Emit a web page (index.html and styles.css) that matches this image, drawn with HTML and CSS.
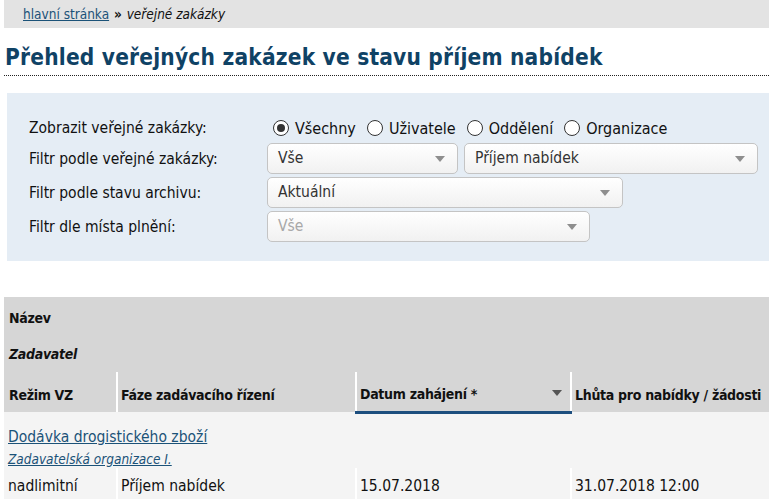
FILE: index.html
```html
<!DOCTYPE html>
<html>
  <head>
    <meta http-equiv="Content-Type" content="text/html; charset=utf-8" />
    <title>Přehled veřejných zakázek</title>
    <link rel="stylesheet" href="styles.css">
  </head>

  <body>
    <div class="page">
      <div class="crumbs">
        <a href="#">hlavní stránka</a> <span class="sep">»</span> <em>veřejné zakázky</em>
      </div>

      <h1 class="title">Přehled veřejných zakázek ve stavu příjem nabídek</h1>

      <div class="filter">
        <div class="row first">
          <label class="lbl">Zobrazit veřejné zakázky:</label>
          <div class="radios">
            <span class="radio checked"></span><span class="rtext">Všechny</span>
            <span class="radio"></span><span class="rtext">Uživatele</span>
            <span class="radio"></span><span class="rtext">Oddělení</span>
            <span class="radio"></span><span class="rtext">Organizace</span>
          </div>
        </div>
        <div class="row">
          <label class="lbl">Filtr podle veřejné zakázky:</label>
          <div class="sel w1"><span>Vše</span><i class="arrow"></i></div>
          <div class="sel w2"><span>Příjem nabídek</span><i class="arrow"></i></div>
        </div>
        <div class="row">
          <label class="lbl">Filtr podle stavu archivu:</label>
          <div class="sel w3"><span>Aktuální</span><i class="arrow"></i></div>
        </div>
        <div class="row">
          <label class="lbl">Filtr dle místa plnění:</label>
          <div class="sel w4 disabled"><span>Vše</span><i class="arrow"></i></div>
        </div>
      </div>

      <table class="grid">
        <thead>
          <tr class="h1"><th colspan="4">Název</th></tr>
          <tr class="h2"><th colspan="4"><em>Zadavatel</em></th></tr>
          <tr class="h3">
            <th class="c1">Režim VZ</th>
            <th class="c2">Fáze zadávacího řízení</th>
            <th class="c3 sorted">Datum zahájení *<i class="arrow"></i></th>
            <th class="c4">Lhůta pro nabídky / žádosti</th>
          </tr>
        </thead>
        <tbody>
          <tr class="r1"><td colspan="4"><a href="#">Dodávka drogistického zboží</a></td></tr>
          <tr class="r2"><td colspan="4"><a href="#"><em>Zadavatelská organizace I.</em></a></td></tr>
          <tr class="r3">
            <td>nadlimitní</td>
            <td>Příjem nabídek</td>
            <td>15.07.2018</td>
            <td>31.07.2018 12:00</td>
          </tr>
        </tbody>
      </table>
    </div>
  </body>
</html>
```

FILE: styles.css
```css
* {
  margin: 0;
  padding: 0;
  box-sizing: border-box;
}
body {
  font-family: "DejaVu Sans Condensed", "DejaVu Sans", sans-serif;
  font-size: 15.5px;
  color: #111;
  background: #fff;
}
a {
  color: #1b5278;
}
.page {
  padding-left: 4px;
}
/* drobečková navigace */
.crumbs {
  height: 28px;
  background-color: #e3e3e3;
  padding: 6px 0 0 19px;
  font-size: 13.5px;
}
.crumbs .sep {
  font-weight: bold;
  margin: 0 1px;
}
.title {
  margin-top: 16px;
  padding: 0 0 4px 1px;
  box-sizing: content-box;
  height: 27px;
  font-size: 22.5px;
  line-height: 27px;
  font-weight: bold;
  color: #0f4265;
  border-bottom: 1px dotted #222;
  letter-spacing: 0.2px;
}
/* filtr */
.filter {
  margin: 17px 0 0 3px;
  height: 168px;
  background-color: #e5edf5;
  padding: 24px 0 0 22px;
}
.row {
  display: flex;
  align-items: center;
  margin-bottom: 3px;
}
.row.first {
  margin-bottom: 4px;
}
.lbl {
  width: 238px;
}
.radios {
  display: flex;
  align-items: center;
  height: 22px;
  margin-left: 6px;
  font-size: 16px;
}
.radio {
  width: 16px;
  height: 16px;
  border: 1px solid #333;
  border-radius: 50%;
  background: #fff;
  margin-right: 6px;
  position: relative;
}
.radio.checked::after {
  content: "";
  position: absolute;
  left: 3px;
  top: 3px;
  width: 8px;
  height: 8px;
  border-radius: 50%;
  background: #333;
}
.rtext {
  margin-right: 11px;
}
.sel {
  position: relative;
  height: 31px;
  border: 1px solid #c4c4c4;
  border-radius: 5px;
  background: linear-gradient(#ffffff, #f1f1f1);
  padding: 5px 0 0 10px;
  margin-right: 6px;
  color: #333;
}
.sel.disabled {
  color: #a8a8a8;
}
.w1 { width: 191px; }
.w2 { width: 294px; }
.w3 { width: 356px; }
.w4 { width: 323px; }
.arrow {
  position: absolute;
  right: 12px;
  top: 12px;
  width: 0;
  height: 0;
  border-left: 5px solid transparent;
  border-right: 5px solid transparent;
  border-top: 6px solid #8e8e8e;
}
/* tabulka */
.grid {
  margin-top: 36px;
  width: 100%;
  border-collapse: collapse;
}
.grid th {
  background-color: #d6d6d6;
  text-align: left;
  font-weight: bold;
  padding: 0 3px;
  font-size: 14px;
  letter-spacing: -0.3px;
  white-space: nowrap;
}
.h1 th { height: 39px; padding-top: 2px; padding-left: 5px; }
.h2 th { height: 36px; padding-left: 5px; }
.h3 th { height: 40px; padding-top: 6px; }
.h3 .c1 { padding-left: 5px; }
.h3 th + th,
.r3 td + td {
  border-left: 2px solid #fff;
}
.c1 { width: 113px; }
.c2 { width: 239px; }
.c3 { width: 215px; }
.sorted {
  position: relative;
  border-bottom: 3px solid #1c4e7e;
}
.sorted .arrow {
  border-top-color: #555;
  right: 8px;
  top: 18px;
}
.grid td {
  background-color: #f4f4f4;
  padding: 0 3px;
  font-size: 15.5px;
  white-space: nowrap;
}
.grid tr td:first-child {
  padding-left: 4px;
}
.r1 td { height: 37px; padding-top: 12px; }
.r2 td { height: 19px; font-size: 13.5px; }
.r3 td { height: 31px; padding-top: 4px; }
```
